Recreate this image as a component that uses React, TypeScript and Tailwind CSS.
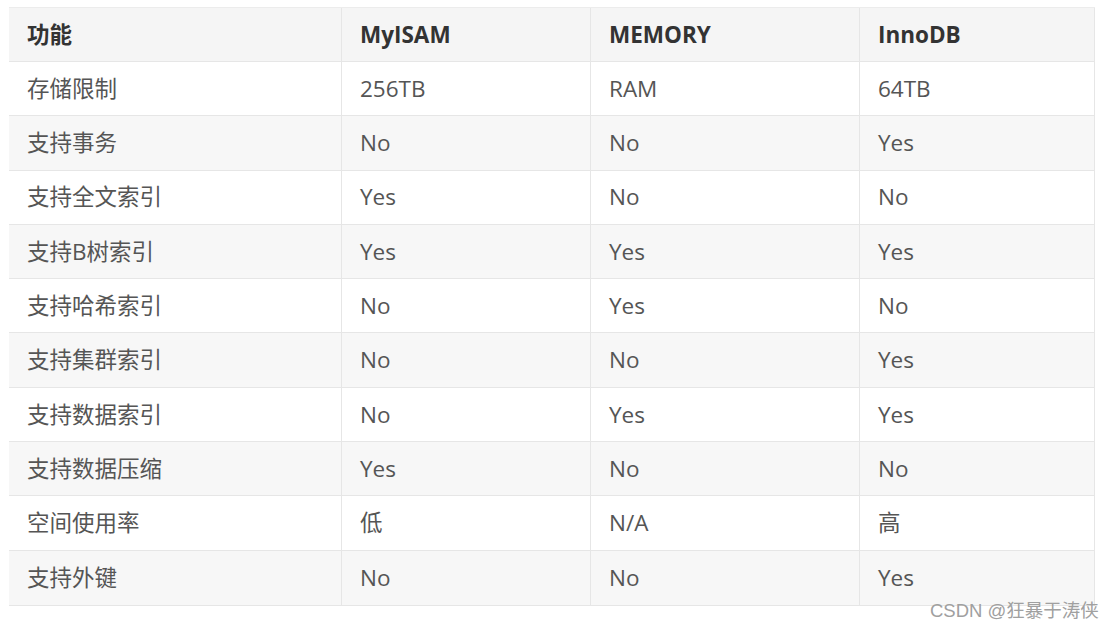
const header = ['功能', 'MyISAM', 'MEMORY', 'InnoDB'];

const rows: string[][] = [
  ['存储限制', '256TB', 'RAM', '64TB'],
  ['支持事务', 'No', 'No', 'Yes'],
  ['支持全文索引', 'Yes', 'No', 'No'],
  ['支持B树索引', 'Yes', 'Yes', 'Yes'],
  ['支持哈希索引', 'No', 'Yes', 'No'],
  ['支持集群索引', 'No', 'No', 'Yes'],
  ['支持数据索引', 'No', 'Yes', 'Yes'],
  ['支持数据压缩', 'Yes', 'No', 'No'],
  ['空间使用率', '低', 'N/A', '高'],
  ['支持外键', 'No', 'No', 'Yes'],
];

// column widths taken from the screenshot
const cols = 'grid grid-cols-[332px_249px_269px_236px]';

export default function App() {
  return (
    <div
      className="relative w-[1117px] h-[629px] bg-white overflow-hidden pt-[7px] pl-[9px]"
      style={{ fontFamily: '"Open Sans", "Noto Sans CJK SC", sans-serif' }}
    >
      <div className="w-[1086px] border-b border-[#e6e6e6]">
        {/* Header row */}
        <div className={`${cols} h-[55px] bg-[#f5f5f5] border-t border-[#ececec]`}>
          {header.map((h, i) => (
            <div
              key={h}
              className={`flex items-center pl-[18px] text-[22.5px] font-bold text-[#333] border-[#e6e6e6] border-b ${i > 0 ? 'border-l' : ''} ${i === 3 ? 'border-r' : ''}`}
            >
              {h}
            </div>
          ))}
        </div>

        {/* Body rows */}
        {rows.map((r, ri) => (
          <div
            key={r[0]}
            className={`${cols} h-[54.3px] ${ri % 2 === 1 ? 'bg-[#f7f7f7]' : 'bg-white'}`}
          >
            {r.map((c, ci) => (
              <div
                key={ci}
                className={`flex items-center pl-[18px] text-[22.5px] text-[#555] border-[#e6e6e6] ${ri < rows.length - 1 ? 'border-b' : ''} ${ci > 0 ? 'border-l' : ''} ${ci === 3 ? 'border-r' : ''}`}
              >
                {c}
              </div>
            ))}
          </div>
        ))}
      </div>

      {/* watermark */}
      <div
        className="absolute left-[930px] top-[597px] text-[18.5px] text-[#a0a0a0] whitespace-nowrap"
        style={{ fontFamily: '"Liberation Sans", "Noto Sans CJK SC", sans-serif' }}
      >
        CSDN @狂暴于涛侠
      </div>
    </div>
  );
}
